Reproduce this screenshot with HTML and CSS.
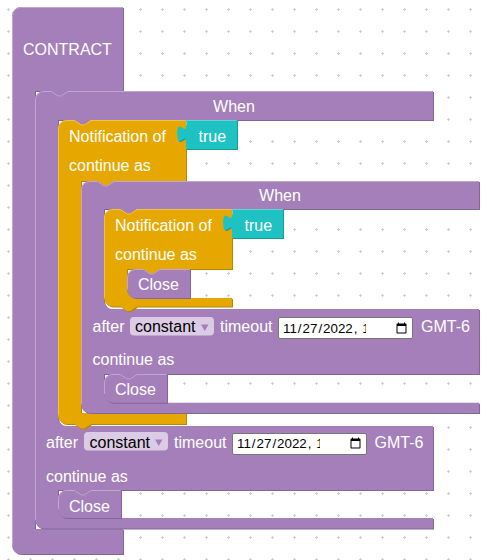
FILE: index.html
```html
<!DOCTYPE html>
<html lang="en">
<head>
<meta charset="utf-8">
<title>Contract blocks</title>
<link rel="stylesheet" href="styles.css">
</head>
<body>
<div class="workspace">
  <svg class="canvas" width="491" height="560" viewBox="0 0 491 560" xmlns="http://www.w3.org/2000/svg">
    <defs>
      <pattern id="grid" width="22" height="22" patternUnits="userSpaceOnUse">
        <rect x="7" y="9" width="3" height="1" class="grid-dot"/>
        <rect x="8" y="8" width="1" height="3" class="grid-dot"/>
      </pattern>
      <path id="b-contract" d="M12,15.8 A8.8,8.8 0 0 1 20.8,7 H123 V91 H68 l-6.6,4.4 -3.3,0 -6.6,-4.4 H35 V529 H123 V554 H20.8 A8.8,8.8 0 0 1 12,545.2 Z"/>
      <path id="b-when1" d="M35,99.8 A8.8,8.8 0 0 1 43.8,91 H51.5 l6.6,4.4 3.3,0 6.6,-4.4 H433 V120 H91 l-6.6,4.4 -3.3,0 -6.6,-4.4 H58 V417.2 A8.8,8.8 0 0 0 66.8,426 H433 V490 H91 l-6.6,4.4 -3.3,0 -6.6,-4.4 H58 V509.2 A8.8,8.8 0 0 0 66.8,518 H433 V528.5 H43.8 A8.8,8.8 0 0 1 35,519.7 Z"/>
      <path id="b-notif1" d="M58,128.8 A8.8,8.8 0 0 1 66.8,120 H74.5 l6.6,4.4 3.3,0 6.6,-4.4 H186 V181 H114 l-6.6,4.4 -3.3,0 -6.6,-4.4 H81 V413 H186 V424 H91 l-6.6,4.4 -3.3,0 -6.6,-4.4 H66.8 A8.8,8.8 0 0 1 58,415.2 Z"/>
      <path id="b-true1" d="M186,120 H237 V149 H186 V142 c0,-11 -8.8,8.8 -8.8,-8.25 s8.8,2.75 8.8,-8.25 Z"/>
      <path id="b-when2" d="M81,189.8 A8.8,8.8 0 0 1 89.8,181 H97.5 l6.6,4.4 3.3,0 6.6,-4.4 H479 V209 H137 l-6.6,4.4 -3.3,0 -6.6,-4.4 H104 V300.2 A8.8,8.8 0 0 0 112.8,309 H479 V374 H137 l-6.6,4.4 -3.3,0 -6.6,-4.4 H104 V393.9 A8.8,8.8 0 0 0 112.8,402.7 H479 V413 H89.8 A8.8,8.8 0 0 1 81,404.2 Z"/>
      <path id="b-notif2" d="M104,217.8 A8.8,8.8 0 0 1 112.8,209 H120.5 l6.6,4.4 3.3,0 6.6,-4.4 H232 V269 H160 l-6.6,4.4 -3.3,0 -6.6,-4.4 H127 V289.2 A8.8,8.8 0 0 0 135.8,298 H232 V306.5 H137 l-6.6,4.4 -3.3,0 -6.6,-4.4 H112.8 A8.8,8.8 0 0 1 104,297.7 Z"/>
      <path id="b-true2" d="M232,209 H283 V238 H232 V231 c0,-11 -8.8,8.8 -8.8,-8.25 s8.8,2.75 8.8,-8.25 Z"/>
      <path id="b-close1" d="M127,277.8 A8.8,8.8 0 0 1 135.8,269 H143.5 l6.6,4.4 3.3,0 6.6,-4.4 H190 V298 H135.8 A8.8,8.8 0 0 1 127,289.2 Z"/>
      <path id="b-close2" d="M104,382.8 A8.8,8.8 0 0 1 112.8,374 H120.5 l6.6,4.4 3.3,0 6.6,-4.4 H167 V402.7 H112.8 A8.8,8.8 0 0 1 104,393.9 Z"/>
      <path id="b-close3" d="M58,498.8 A8.8,8.8 0 0 1 66.8,490 H74.5 l6.6,4.4 3.3,0 6.6,-4.4 H121 V518 H66.8 A8.8,8.8 0 0 1 58,509.2 Z"/>
    </defs>

    <rect class="grid" width="491" height="560" fill="url(#grid)"/>

    <!-- CONTRACT -->
    <use href="#b-contract" class="shade-purple"/>
    <use href="#b-contract" class="fill-purple"/>
    <path class="hl-purple" d="M12.5,545.2 V15.8 A8.3,8.3 0 0 1 20.8,7.5 H122.5"/>
    <text class="label" x="23" y="55">CONTRACT</text>

    <!-- outer When -->
    <use href="#b-when1" class="shade-purple"/>
    <use href="#b-when1" class="fill-purple"/>
    <path class="hl-purple" d="M35.5,519.7 V99.8 A8.3,8.3 0 0 1 43.8,91.5 H51.5 l6.6,4.4 3.3,0 6.6,-4.4 H432.5"/>
    <text class="label centered" x="234" y="111.5">When</text>
    <text class="label" x="46" y="447.5">after</text>
    <rect class="dropdown" x="84" y="432" width="84" height="18.5" rx="4"/>
    <text class="label dark" x="89.5" y="447.5">constant</text>
    <polygon class="arrow" points="155,439.5 162.5,439.5 158.75,446"/>
    <text class="label" x="174" y="447.5">timeout</text>
    <text class="label" x="374.5" y="447.5">GMT-6</text>
    <text class="label" x="46" y="481.5">continue as</text>

    <!-- outer Notification -->
    <use href="#b-notif1" class="shade-orange"/>
    <use href="#b-notif1" class="fill-orange"/>
    <path class="hl-orange" d="M58.5,415.2 V128.8 A8.3,8.3 0 0 1 66.8,120.5 H74.5 l6.6,4.4 3.3,0 6.6,-4.4 H185.5"/>
    <text class="label" x="69" y="141.5">Notification of</text>
    <text class="label" x="69" y="171">continue as</text>

    <use href="#b-true1" class="shade-teal"/>
    <use href="#b-true1" class="fill-teal"/>
    <path class="hl-teal" d="M186.5,125.5 V120.5 H236.5"/>
    <text class="label" x="198.5" y="141.5">true</text>

    <!-- inner When -->
    <use href="#b-when2" class="shade-purple"/>
    <use href="#b-when2" class="fill-purple"/>
    <path class="hl-purple" d="M81.5,404.2 V189.8 A8.3,8.3 0 0 1 89.8,181.5 H97.5 l6.6,4.4 3.3,0 6.6,-4.4 H478.5"/>
    <text class="label centered" x="280" y="200.5">When</text>
    <text class="label" x="92.5" y="331.5">after</text>
    <rect class="dropdown" x="130" y="317" width="84" height="18.5" rx="4"/>
    <text class="label dark" x="135" y="331.5">constant</text>
    <polygon class="arrow" points="201,324.5 208.5,324.5 204.75,331"/>
    <text class="label" x="220" y="331.5">timeout</text>
    <text class="label" x="421" y="331.5">GMT-6</text>
    <text class="label" x="92.5" y="365">continue as</text>

    <!-- inner Notification -->
    <use href="#b-notif2" class="shade-orange"/>
    <use href="#b-notif2" class="fill-orange"/>
    <path class="hl-orange" d="M104.5,297.7 V217.8 A8.3,8.3 0 0 1 112.8,209.5 H120.5 l6.6,4.4 3.3,0 6.6,-4.4 H231.5"/>
    <text class="label" x="115" y="230.5">Notification of</text>
    <text class="label" x="115" y="260">continue as</text>

    <use href="#b-true2" class="shade-teal"/>
    <use href="#b-true2" class="fill-teal"/>
    <path class="hl-teal" d="M232.5,214.5 V209.5 H282.5"/>
    <text class="label" x="244.5" y="230.5">true</text>

    <!-- Close blocks -->
    <use href="#b-close1" class="shade-purple"/>
    <use href="#b-close1" class="fill-purple"/>
    <path class="hl-purple" d="M127.5,289.2 V277.8 A8.3,8.3 0 0 1 135.8,269.5 H143.5 l6.6,4.4 3.3,0 6.6,-4.4 H189.5"/>
    <text class="label" x="138" y="290">Close</text>

    <use href="#b-close2" class="shade-purple"/>
    <use href="#b-close2" class="fill-purple"/>
    <path class="hl-purple" d="M104.5,393.9 V382.8 A8.3,8.3 0 0 1 112.8,374.5 H120.5 l6.6,4.4 3.3,0 6.6,-4.4 H166.5"/>
    <text class="label" x="115" y="395">Close</text>

    <use href="#b-close3" class="shade-purple"/>
    <use href="#b-close3" class="fill-purple"/>
    <path class="hl-purple" d="M58.5,509.2 V498.8 A8.3,8.3 0 0 1 66.8,490.5 H74.5 l6.6,4.4 3.3,0 6.6,-4.4 H120.5"/>
    <text class="label" x="69" y="511.5">Close</text>
  </svg>

  <input class="date-field date-inner" type="datetime-local" value="2022-11-27T10:00">
  <input class="date-field date-outer" type="datetime-local" value="2022-11-27T10:00">
</div>
</body>
</html>
```

FILE: styles.css
```css
html, body {
  margin: 0;
  padding: 0;
  background: #ffffff;
}

.workspace {
  position: relative;
  width: 491px;
  height: 560px;
  overflow: hidden;
  background: #ffffff;
}

.canvas {
  display: block;
}

.grid-dot {
  fill: #cfcfcf;
}

.fill-purple { fill: #a47fba; }
.shade-purple { fill: #836699; transform: translate(1px, 1px); }
.hl-purple { fill: none; stroke: #c0a6d0; stroke-width: 1; }

.fill-orange { fill: #e6a800; }
.shade-orange { fill: #b88700; transform: translate(1px, 1px); }
.hl-orange { fill: none; stroke: #efc24c; stroke-width: 1; }

.fill-teal { fill: #1fc2c2; }
.shade-teal { fill: #199b9b; transform: translate(1px, 1px); }
.hl-teal { fill: none; stroke: #62d4d4; stroke-width: 1; }

.label {
  font-family: "Liberation Sans", Arial, sans-serif;
  font-size: 16px;
  fill: #ffffff;
}

.label.centered {
  text-anchor: middle;
}

.label.dark {
  fill: #000000;
}

.dropdown {
  fill: #dccbe4;
}

.arrow {
  fill: #a47fba;
}

.date-field {
  position: absolute;
  box-sizing: border-box;
  display: flex;
  align-items: center;
  width: 135px;
  height: 22px;
  margin: 0;
  padding: 0 5px 0 3px;
  border: 1px solid #767676;
  border-radius: 2px;
  background: #ffffff;
  color: #000000;
  font-family: "Liberation Sans", Arial, sans-serif;
  font-size: 13.33px;
}

.date-field::-webkit-datetime-edit {
  flex: 0 0 84px;
  width: 84px;
  overflow: hidden;
  padding: 0;
}

.date-field::-webkit-datetime-edit-fields-wrapper {
  padding: 0;
}

.date-field::-webkit-calendar-picker-indicator {
  margin-left: 29px;
  padding: 0;
  width: 13px;
  height: 13px;
}

.date-inner {
  left: 278px;
  top: 317px;
}

.date-outer {
  left: 232px;
  top: 432.5px;
}
```
